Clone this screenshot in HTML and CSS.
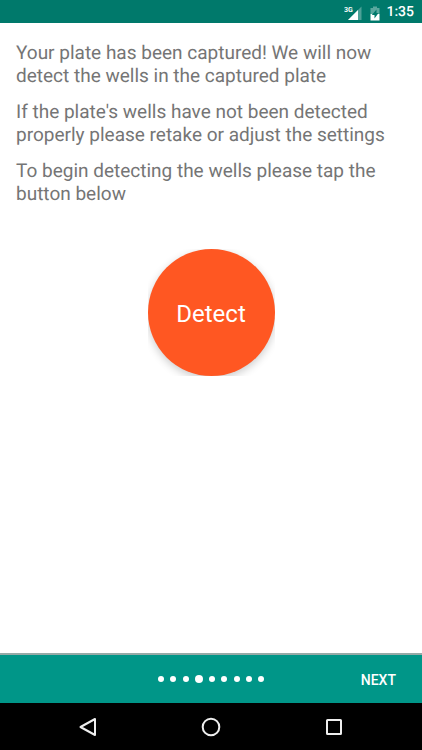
FILE: index.html
```html
<!DOCTYPE html>
<html lang="en">
<head>
<meta charset="utf-8">
<meta name="viewport" content="width=device-width, initial-scale=1">
<title>Detect wells</title>
<link rel="stylesheet" href="styles.css">
</head>
<body>
<header class="status-bar">
  <svg class="signal" width="18" height="20" viewBox="0 0 18 20" role="img" aria-label="3G signal">
    <path d="M17.500 3.500V17H4z" fill="#fff" fill-opacity=".3"/>
    <path d="M14 7v10H4z" fill="#fff"/>
    <text class="network" x="0" y="9">3G</text>
  </svg>
  <svg class="battery" width="10" height="20" viewBox="0 0 10 20" role="img" aria-label="Battery charging">
    <path d="M3 3.500h4V5h2.500v6h-9V5H3z" fill="#fff" fill-opacity=".35"/>
    <path d="M0.500 11h9v6.500h-9z" fill="#fff"/>
    <path d="M6.500 6.500L1.800 12h2.700v3.500L8.500 10h-2z" fill="#00796b"/>
  </svg>
  <time class="clock">1:35</time>
</header>
<main class="content">
  <p>Your plate has been captured! We will now detect the wells in the captured plate</p>
  <p>If the plate's wells have not been detected properly please retake or adjust the settings</p>
  <p>To begin detecting the wells please tap the button below</p>
  <div class="action">
    <button class="detect" type="button">Detect</button>
  </div>
</main>
<footer class="pager">
  <ol class="dots" aria-label="Step 4 of 9">
    <li></li><li></li><li></li><li class="current"></li><li></li><li></li><li></li><li></li><li></li>
  </ol>
  <button class="next" type="button">NEXT</button>
</footer>
<nav class="system-nav" aria-label="System">
  <button type="button" aria-label="Back">
    <svg width="22" height="22" viewBox="0 0 22 22"><path d="M18 3v16L3.500 11z"/></svg>
  </button>
  <button type="button" aria-label="Home">
    <svg width="22" height="22" viewBox="0 0 22 22"><circle cx="11" cy="11" r="8.300"/></svg>
  </button>
  <button type="button" aria-label="Recent apps">
    <svg width="22" height="22" viewBox="0 0 22 22"><rect x="4" y="4" width="14" height="14" rx=".5"/></svg>
  </button>
</nav>
</body>
</html>
```
FILE: styles.css
```css
* {
  box-sizing: border-box;
}

body {
  margin: 0;
  min-height: 100vh;
  display: flex;
  flex-direction: column;
  background: #fff;
  color: #757575;
  font-family: Roboto, "Liberation Sans", sans-serif;
  text-rendering: geometricPrecision;
}

button {
  border: 0;
  padding: 0;
  background: none;
  color: #fff;
  font-family: inherit;
  cursor: pointer;
}

.status-bar {
  display: flex;
  align-items: center;
  justify-content: flex-end;
  height: 23px;
  padding: 2px 8px 0;
  background: #00796b;
  color: #fff;
}

.battery {
  margin: 0 6px 0 8px;
}

.network {
  fill: #fff;
  font-size: 7px;
  font-weight: 700;
}

.clock {
  font-size: 14px;
  font-weight: 500;
  line-height: 21px;
}

.content {
  flex: 1;
  padding: 18px 16px;
}

.content p {
  margin: 0 0 13px;
  font-size: 19px;
  line-height: 23px;
}

/* The clip keeps the button's shadow inside its own square. */
.action {
  width: 127px;
  height: 127px;
  margin: 44px auto 0;
  overflow: hidden;
}

.detect {
  display: block;
  width: 100%;
  height: 100%;
  padding-top: 3px;
  border-radius: 50%;
  background: #ff5722;
  box-shadow: 0 3px 8px rgba(0, 0, 0, 0.2);
  font-size: 24px;
}

.pager {
  display: grid;
  grid-template-columns: 1fr auto 1fr;
  align-items: center;
  height: 50px;
  border-top: 2px solid #96aaa7;
  background: #009688;
}

.dots {
  grid-column: 2;
  display: flex;
  align-items: center;
  justify-content: space-between;
  width: 106px;
  margin: 0;
  padding: 0;
  list-style: none;
}

.dots li {
  width: 6px;
  height: 6px;
  border-radius: 50%;
  background: #fff;
}

.dots .current {
  width: 8px;
  height: 8px;
}

.next {
  justify-self: end;
  margin-right: 26px;
  padding-top: 2px;
  font-size: 14px;
  font-weight: 500;
}

.system-nav {
  display: grid;
  grid-template-columns: repeat(3, 1fr);
  height: 47px;
  padding: 0 27px;
  background: #000;
}

.system-nav button {
  display: flex;
  align-items: center;
  justify-content: center;
}

.system-nav svg {
  fill: none;
  stroke: #eee;
  stroke-width: 2;
  stroke-linejoin: round;
}
```
